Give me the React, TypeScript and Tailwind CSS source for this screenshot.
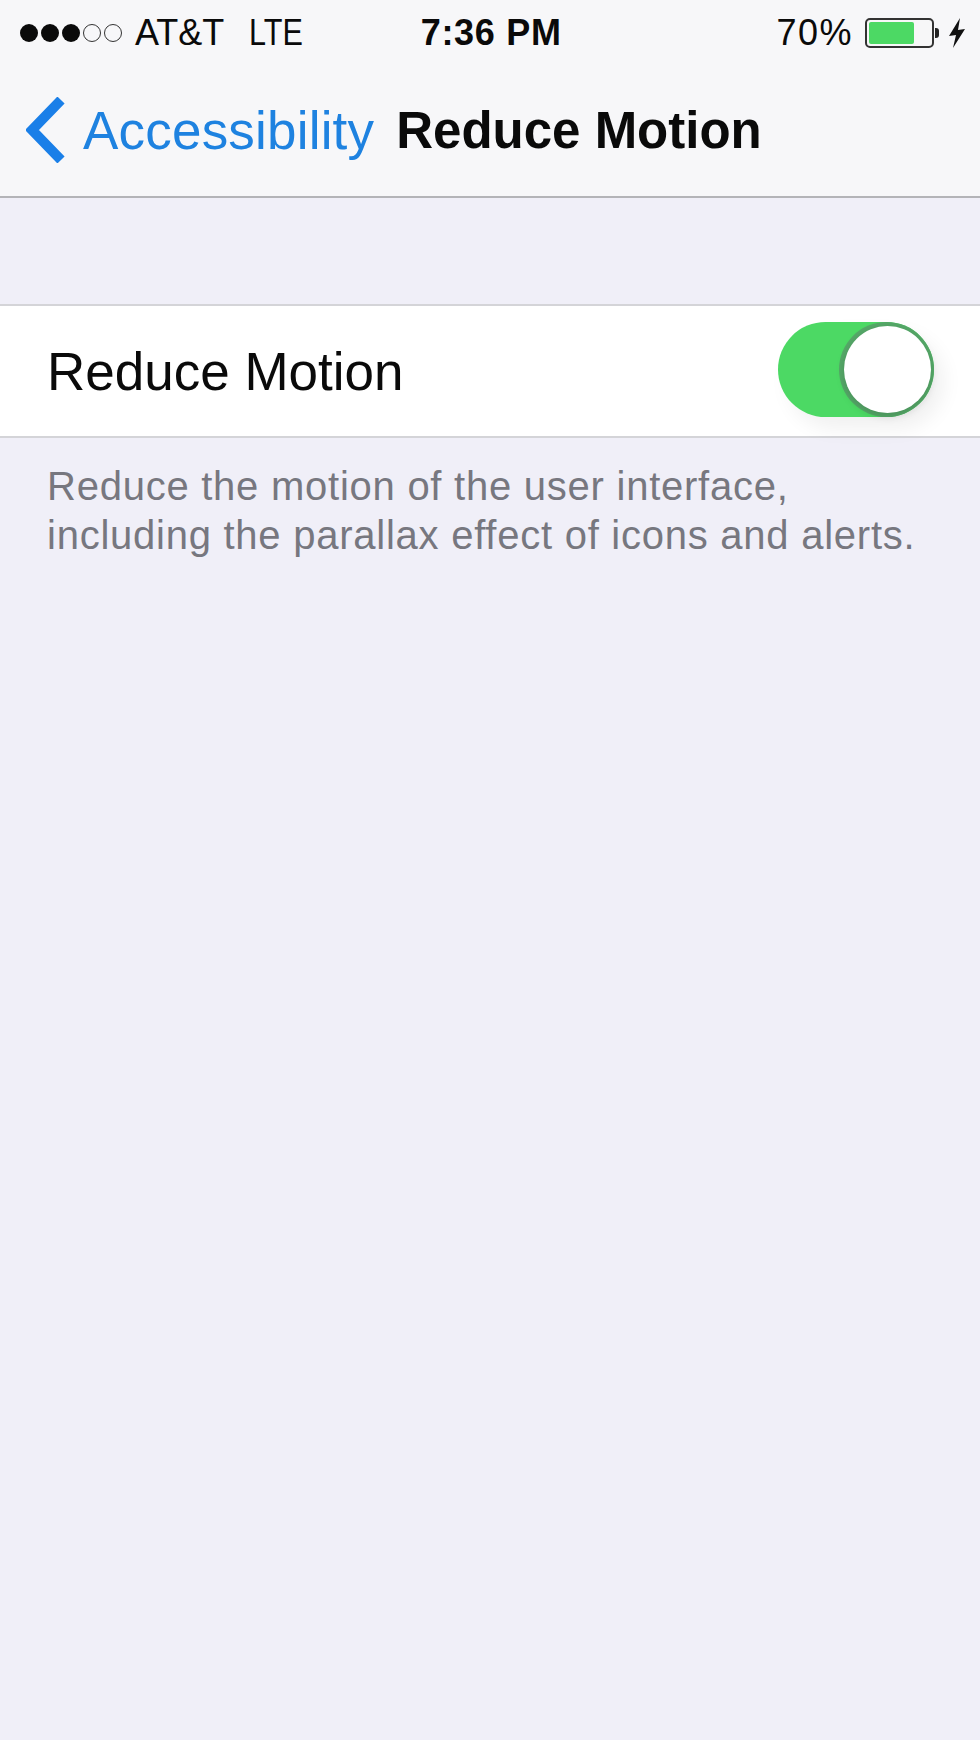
import React from 'react';

const Dot = ({ filled }: { filled: boolean }) => (
    <div className={filled ? 'w-[18px] h-[18px] rounded-full bg-[#0a0a0a]' : 'w-[18px] h-[18px] rounded-full border-[1.5px] border-[#333]'}></div>
);

const StatusBar = () => {
    return (
        <div className="h-[66px] flex items-center relative text-[36px] leading-none text-[#0a0a0a]">
            <div className="flex items-center gap-[3px] ml-[20px]">
                <Dot filled />
                <Dot filled />
                <Dot filled />
                <Dot filled={false} />
                <Dot filled={false} />
            </div>
            <span className="ml-[13px]">AT&amp;T</span>
            <span className="ml-[25px] font-light scale-x-[0.85] origin-left">LTE</span>
            <span className="ml-[108px] font-bold tracking-[0.7px]">7:36 PM</span>
            <span className="ml-auto tracking-[1.5px]">70%</span>
            <div className="ml-[12px] flex items-center">
                <div className="w-[69px] h-[30px] rounded-[5px] border-2 border-[#333] p-[2px] bg-[#f7f7f8]">
                    <div className="w-[45px] h-full bg-[#4cd964] rounded-[2px]"></div>
                </div>
                <div className="w-[4px] h-[10px] bg-[#222] rounded-r-[3px] ml-[1px]"></div>
            </div>
            <svg className="ml-[9px] mr-[14px]" width="18" height="30" viewBox="0 0 18 30">
                <path d="M12 0 L1 18 L8 17 L5 30 L17 11 L10 12 Z" fill="#111" />
            </svg>
        </div>
    );
};

const Toggle = () => {
    return (
        <div className="w-[156px] h-[95px] -mt-[3px] rounded-full bg-[#4cd964] relative shadow-[10px_12px_20px_rgba(0,0,0,0.06)]">
            <div className="absolute right-0 top-0 w-[95px] h-[95px] rounded-full bg-[#55a868]"></div>
            <div className="absolute right-[3px] top-[4px] w-[87px] h-[87px] rounded-full bg-white shadow-[0_3px_8px_rgba(0,0,0,0.15)]"></div>
        </div>
    );
};

const App = () => {
    return (
        <div className="w-[980px] h-[1740px] bg-[#f0eff8] overflow-hidden font-['Liberation_Sans',Arial,sans-serif]">
            <div className="bg-[#f7f7f9] border-b-2 border-[#b4b4b8] h-[198px]">
                <StatusBar />
                <div className="flex items-center h-[130px] pb-[2px]">
                    <svg className="ml-[26px]" width="40" height="66" viewBox="0 0 40 66">
                        <path d="M35 3 L6 33 L35 63" fill="none" stroke="#1a7fe8" strokeWidth="10" />
                    </svg>
                    <span className="ml-[17px] text-[53px] tracking-[0.2px] text-[#1e82e0] leading-none">Accessibility</span>
                    <span className="ml-[22px] text-[51px] font-bold text-[#0a0a0a] leading-none">Reduce Motion</span>
                </div>
            </div>

            <div className="mt-[106px] bg-white border-y-2 border-[#d4d4d8] h-[134px] flex items-center justify-between pl-[47px] pr-[46px]">
                <span className="text-[53px] leading-none text-[#0a0a0a]">Reduce Motion</span>
                <Toggle />
            </div>

            <div className="pt-[24px] pl-[47px] text-[40px] tracking-[0.75px] leading-[49px] text-[#77777f]">
                <div>Reduce the motion of the user interface,</div>
                <div>including the parallax effect of icons and alerts.</div>
            </div>
        </div>
    );
};

export default App;
